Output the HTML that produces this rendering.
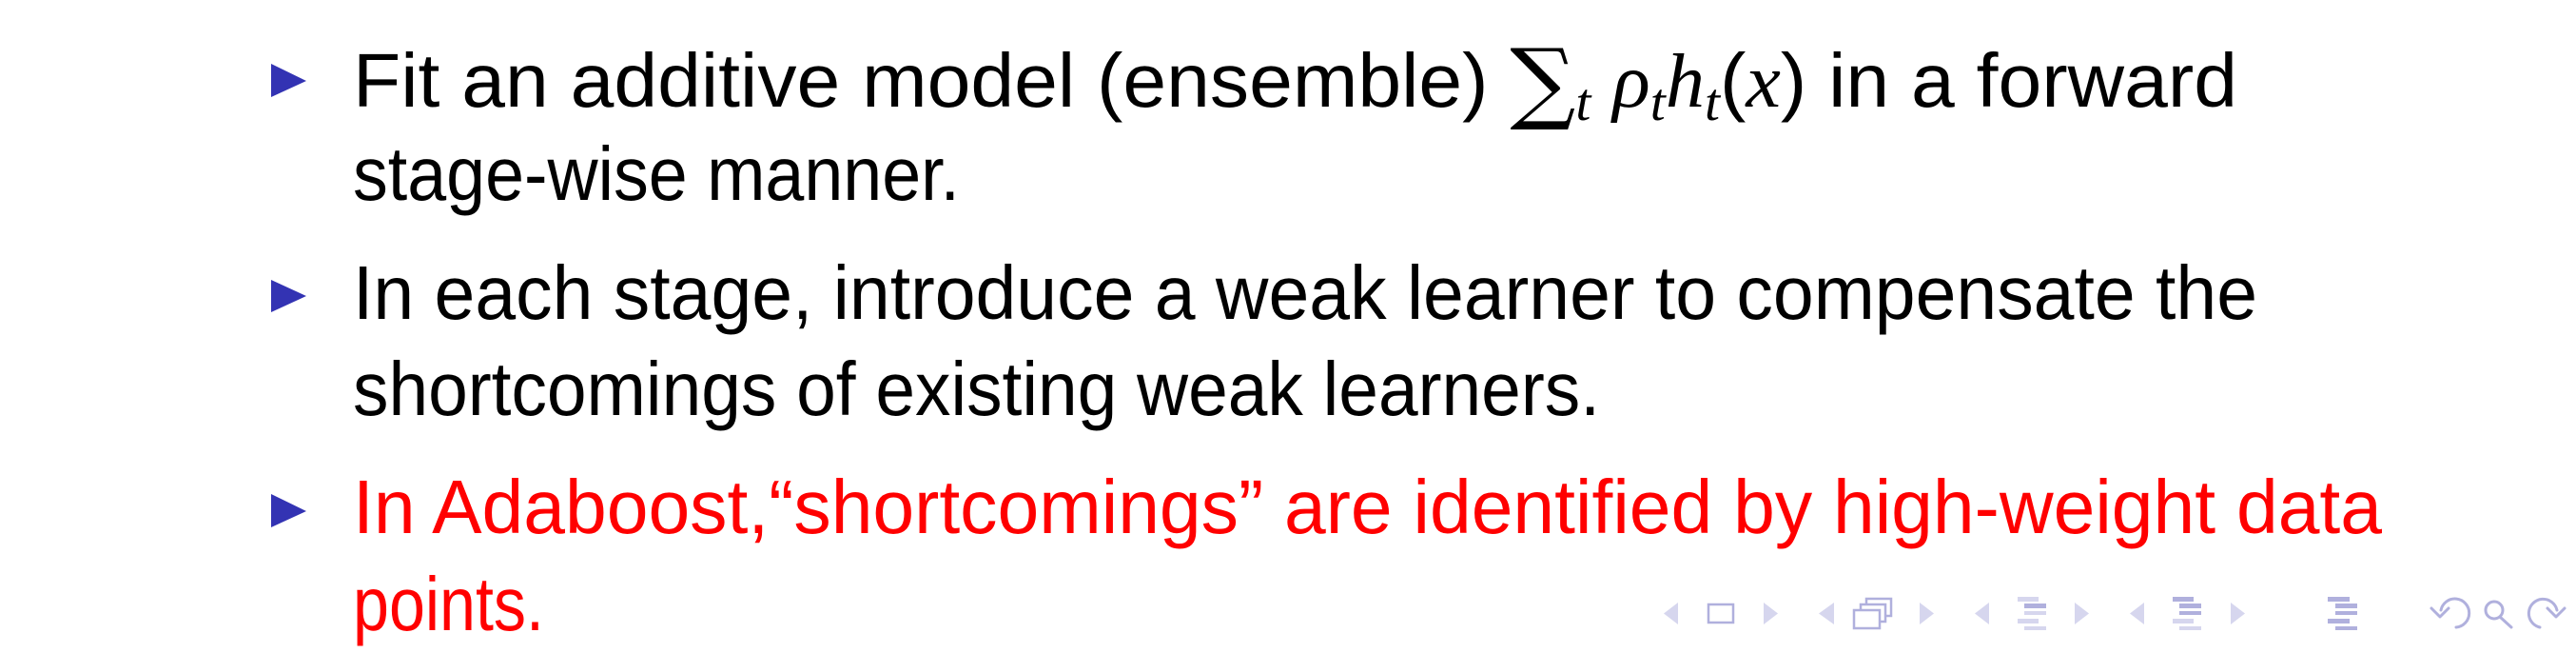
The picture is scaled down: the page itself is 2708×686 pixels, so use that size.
<!DOCTYPE html>
<html><head><meta charset="utf-8">
<style>
html,body{margin:0;padding:0;background:#fff;}
body{width:2708px;height:686px;position:relative;overflow:hidden;font-family:"Liberation Sans",sans-serif;}
.ln{position:absolute;left:371px;font-size:80px;line-height:80px;white-space:nowrap;transform-origin:0 0;}
.red{color:#ff0000;}
.m{font-family:"Liberation Serif",serif;font-style:italic;}
.sub{font-family:"Liberation Serif",serif;font-style:italic;font-size:56px;position:relative;top:14px;}
.sum{font-family:"DejaVu Serif",serif;font-size:94px;position:relative;top:6px;}
</style></head><body>
<svg width="2708" height="686" style="position:absolute;left:0;top:0">
<g fill="#3333b3">
<polygon points="285,67 322,85 285,102"/>
<polygon points="285,294 322,311 285,328"/>
<polygon points="285,519 322,537 285,554"/>
</g>
<g fill="#d6d6ee">
<polygon points="1764,633 1749,644.5 1764,656"/>
<polygon points="1854,633 1869,644.5 1854,656"/>
<polygon points="1928,633 1912,644.5 1928,656"/>
<polygon points="2018,633 2033,644.5 2018,656"/>
<polygon points="2091,633 2076,644.5 2091,656"/>
<polygon points="2181,633 2196,644.5 2181,656"/>
<polygon points="2254,633 2239,644.5 2254,656"/>
<polygon points="2345,633 2360,644.5 2345,656"/>
</g>
<g fill="none" stroke="#b0b0dd" stroke-width="2.5">
<rect x="1796" y="635" width="26" height="19"/>
<rect x="1962" y="629" width="26" height="18" fill="#fff"/>
<rect x="1956" y="635" width="26" height="18" fill="#fff"/>
<rect x="1949" y="641" width="27" height="19" fill="#fff"/>
</g>
<g>
<rect x="2121" y="627" width="22" height="5" fill="#d6d6ee"/>
<rect x="2128" y="634" width="23" height="5" fill="#b0b0dd"/>
<rect x="2128" y="642" width="23" height="4" fill="#d6d6ee"/>
<rect x="2121" y="650" width="22" height="5" fill="#d6d6ee"/>
<rect x="2128" y="658" width="23" height="4" fill="#d6d6ee"/>
<rect x="2284" y="627" width="22" height="5" fill="#b0b0dd"/>
<rect x="2291" y="634" width="23" height="5" fill="#b0b0dd"/>
<rect x="2291" y="642" width="23" height="4" fill="#b0b0dd"/>
<rect x="2284" y="650" width="22" height="5" fill="#d6d6ee"/>
<rect x="2291" y="658" width="23" height="4" fill="#d6d6ee"/>
<rect x="2447" y="627" width="23" height="5" fill="#b0b0dd"/>
<rect x="2455" y="634" width="23" height="5" fill="#b0b0dd"/>
<rect x="2455" y="642" width="23" height="4" fill="#b0b0dd"/>
<rect x="2447" y="650" width="23" height="5" fill="#b0b0dd"/>
<rect x="2455" y="658" width="23" height="4" fill="#b0b0dd"/>
</g>
<g fill="none" stroke="#b0b0dd" stroke-width="3" stroke-linecap="round" stroke-linejoin="round">
<path d="M2566,641 A15,15 0 1 1 2582,659"/>
<path d="M2556,639 L2565,648 L2574,639"/>
<circle cx="2622" cy="641" r="9"/>
<path d="M2628,648 L2640,659"/>
<path d="M2688,641 A15,15 0 1 0 2670,659"/>
<path d="M2678,639 L2687,648 L2696,639"/>
</g>
</svg>
<div class="ln" id="l1" data-w="1981" style="top:41px">Fit an additive model (ensemble) <span class="sum">∑</span><span class="sub">t</span> <span class="m">ρ</span><span class="sub">t</span><span class="m">h</span><span class="sub">t</span>(<span class="m">x</span>) in a forward</div>
<div class="ln" id="l2" data-w="638" style="top:143px">stage-wise manner.</div>
<div class="ln" id="l3" data-w="2002" style="top:268px">In each stage, introduce a weak learner to compensate the</div>
<div class="ln" id="l4" data-w="1311" style="top:369px">shortcomings of existing weak learners.</div>
<div class="ln red" id="l5" data-w="2133" style="top:493px">In Adaboost,“shortcomings” are identified by high-weight data</div>
<div class="ln red" id="l6" data-w="201" style="top:595px">points.</div>
<script>
document.querySelectorAll('.ln').forEach(function(e){
  var w=e.getBoundingClientRect().width;var t=+e.getAttribute('data-w');
  if(w>0)e.style.transform='scaleX('+(t/w)+')';
});
</script>
</body></html>
